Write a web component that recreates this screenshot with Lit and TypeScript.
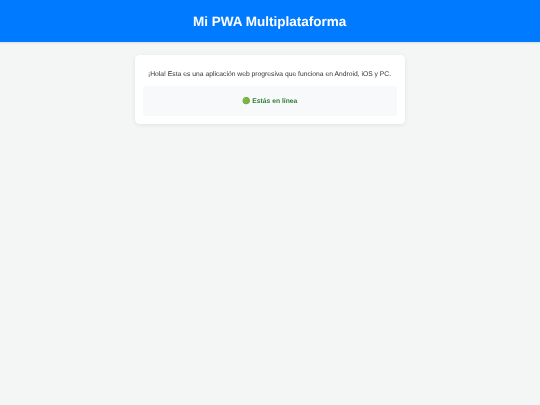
import { LitElement, html, css } from "lit";
import { customElement } from "lit/decorators.js";

@customElement("app-root")
export class AppRoot extends LitElement {
  static styles = css`
    :host { display: block; min-height: 405px; background: #f4f6f6; font-family: "Liberation Sans", Arial, sans-serif; color: #333; text-rendering: geometricPrecision; }
    header { background: #007bff; color: #fff; height: 42px; display: flex; align-items: center; justify-content: center; box-shadow: 0 1px 2px rgba(0,0,0,.1); }
    h1 { margin: 0; font-size: 13.5px; font-weight: 700; will-change: transform; }
    main { width: 270px; margin: 13px auto 0; box-sizing: border-box; background: #fff; border-radius: 4.5px; padding: 8.44px; box-shadow: 0 1px 4px rgba(0,0,0,.08); text-align: center; }
    p { margin: 0; font-size: 6.75px; line-height: 11px; padding: 6px 0 0; height: 22.56px; box-sizing: border-box; will-change: transform; }
    .status { height: 29.6px; padding-top: 1px; box-sizing: border-box; background: #f8f9fa; border-radius: 3px; display: flex; align-items: center; justify-content: center; }
    .status span { font-size: 6.75px; font-weight: 700; color: #2e7d32; will-change: transform; }
  `;
  render() {
    return html`
      <header><h1>Mi PWA Multiplataforma</h1></header>
      <main>
        <p>¡Hola! Esta es una aplicación web progresiva que funciona en Android, iOS y PC.</p>
        <div class="status"><span>🟢 Estás en línea</span></div>
      </main>
    `;
  }
}
